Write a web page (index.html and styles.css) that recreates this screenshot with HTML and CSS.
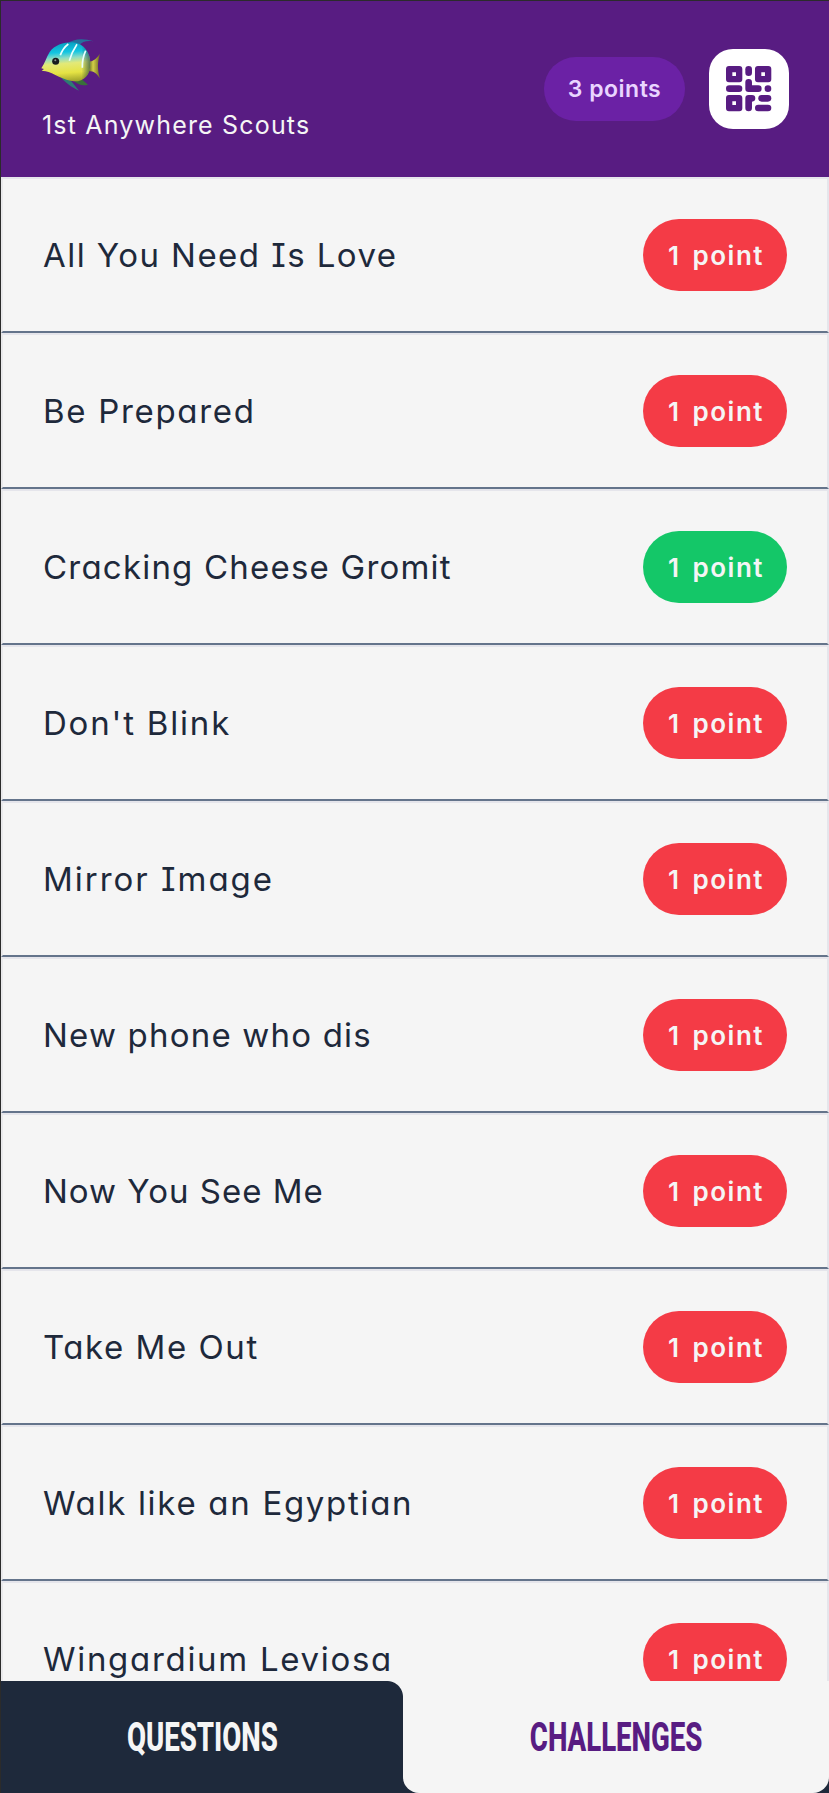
FILE: index.html
```html
<!DOCTYPE html>
<html lang="en">
<head>
<meta charset="utf-8">
<title>Challenges</title>
<link rel="stylesheet" href="styles.css">
</head>
<body>
<div class="app">
  <header class="header">
    <div class="team">
      <svg class="fish" viewBox="0 0 270 225" role="img" aria-label="Tropical fish">
        <defs>
          <linearGradient id="body" x1="0.45" y1="0" x2="0.55" y2="1">
            <stop offset="0" stop-color="#079fc0"/>
            <stop offset="0.25" stop-color="#13c5e2"/>
            <stop offset="0.4" stop-color="#8fdcc4"/>
            <stop offset="0.54" stop-color="#e3e978"/>
            <stop offset="0.78" stop-color="#e5e344"/>
            <stop offset="1" stop-color="#a1a42c"/>
          </linearGradient>
          <linearGradient id="shade" x1="0" y1="0" x2="1" y2="0">
            <stop offset="0.82" stop-color="#123c3c" stop-opacity="0"/>
            <stop offset="1" stop-color="#123c3c" stop-opacity="0.65"/>
          </linearGradient>
          <linearGradient id="tail" x1="0" y1="0" x2="1" y2="0">
            <stop offset="0" stop-color="#6f7424"/>
            <stop offset="0.35" stop-color="#d3cf47"/>
            <stop offset="1" stop-color="#6d6523"/>
          </linearGradient>
        </defs>
        <path fill="#246f9c" d="M112 56C128 42 158 38 191 49C169 46 157 50 147 61Z"/>
        <path fill="#2c7b74" d="M82 145C105 174 127 189 147 197L124 169Z"/>
        <path fill="#397039" d="M132 168C145 180 159 183 174 179L157 164Z"/>
        <path fill="url(#tail)" d="M178 109C189 111 200 99 210 86C202 112 202 133 210 160C200 145 190 136 178 139Z"/>
        <path fill="url(#body)" d="M34 130C45 115 49 96 59 81C74 61 98 52 128 52C163 55 182 84 181 119C180 150 162 170 132 169C103 168 69 143 47 139L35 137L42 132Z"/>
        <path fill="url(#shade)" d="M34 130C45 115 49 96 59 81C74 61 98 52 128 52C163 55 182 84 181 119C180 150 162 170 132 169C103 168 69 143 47 139L35 137L42 132Z"/>
        <path fill="none" stroke="#e9ffff" stroke-width="5" d="M115 57Q98 70 91 91M141 58Q125 82 118 107M167 77Q156 102 157 128"/>
        <circle cx="77" cy="109" r="10.5" fill="#171b1d"/>
        <circle cx="76" cy="106" r="3" fill="#8b9092"/>
      </svg>
      <div class="team-name">1st Anywhere Scouts</div>
    </div>
    <div class="header-actions">
      <span class="score">3 points</span>
      <button class="scan" aria-label="Scan code">
        <svg class="qr" viewBox="0 0 136 136" fill="#581c82">
          <path fill-rule="evenodd" d="M9 0H40Q49 0 49 9V40Q49 49 40 49H9Q0 49 0 40V9Q0 0 9 0ZM19 19V30H30V19Z"/>
          <path fill-rule="evenodd" d="M96 0H127Q136 0 136 9V40Q136 49 127 49H96Q87 49 87 40V9Q87 0 96 0ZM106 19V30H117V19Z"/>
          <path fill-rule="evenodd" d="M9 87H40Q49 87 49 96V127Q49 136 40 136H9Q0 136 0 127V96Q0 87 9 87ZM19 106V117H30V106Z"/>
          <rect x="58" y="0" width="20" height="30" rx="10"/>
          <rect x="0" y="58" width="49" height="20" rx="10"/>
          <path d="M58 49Q58 39 68 39Q78 39 78 49V58H97Q107 58 107 68Q107 78 97 78H68Q58 78 58 68Z"/>
          <circle cx="126" cy="68" r="10"/>
          <path d="M68 87H78Q88 87 88 97Q88 107 78 107V126Q78 136 68 136Q58 136 58 126V97Q58 87 68 87Z"/>
          <rect x="97" y="87" width="39" height="20" rx="10"/>
          <rect x="87" y="116" width="49" height="20" rx="10"/>
        </svg>
      </button>
    </div>
  </header>
  <main class="list">
    <div class="row"><span class="title t1">All You Need Is Love</span><span class="badge">1 point</span></div>
    <div class="row"><span class="title t2">Be Prepared</span><span class="badge">1 point</span></div>
    <div class="row"><span class="title t3">Cracking Cheese Gromit</span><span class="badge done">1 point</span></div>
    <div class="row"><span class="title t4">Don't Blink</span><span class="badge">1 point</span></div>
    <div class="row"><span class="title t5">Mirror Image</span><span class="badge">1 point</span></div>
    <div class="row"><span class="title t6">New phone who dis</span><span class="badge">1 point</span></div>
    <div class="row"><span class="title t7">Now You See Me</span><span class="badge">1 point</span></div>
    <div class="row"><span class="title t8">Take Me Out</span><span class="badge">1 point</span></div>
    <div class="row"><span class="title t9">Walk like an Egyptian</span><span class="badge">1 point</span></div>
    <div class="row"><span class="title t10">Wingardium Leviosa</span><span class="badge">1 point</span></div>
  </main>
  <nav class="tabs">
    <div class="tab questions"><span>QUESTIONS</span></div>
    <div class="tab challenges"><span>CHALLENGES</span></div>
  </nav>
</div>
</body>
</html>
```
FILE: styles.css
```css
* { box-sizing: border-box; }
body { margin: 0; background: #f5f5f5; font-family: Inter, "Open Sans", sans-serif; font-feature-settings: "cv11", "cv08"; }
.app { height: 1793px; border-top: 1px solid #2b2b2b; border-left: 1px solid #2b2b2b; display: flex; flex-direction: column; overflow: hidden; }
.header { height: 176px; flex: none; background: #581c82; display: flex; justify-content: space-between; padding: 24px 40px 0 29px; }
.team { display: flex; flex-direction: column; align-items: flex-start; }
.fish { display: block; width: 90px; height: 75px; }
.team-name { margin-left: 12px; margin-top: 8px; font-size: 25px; line-height: 34px; letter-spacing: 1.18px; color: #f5f5f5; white-space: nowrap; }
.header-actions { display: flex; align-items: center; gap: 24px; height: 80px; margin-top: 24px; }
.score { width: 141px; height: 64px; border-radius: 32px; background: #6b21a5; color: #e9d5ff; display: flex; align-items: center; justify-content: center; font-size: 23px; font-weight: 600; letter-spacing: 0.5px; white-space: nowrap; }
.scan { width: 80px; height: 80px; border: 0; border-radius: 24px; padding: 0; background: #fff; display: flex; align-items: center; justify-content: center; }
.qr { width: 45.3px; height: 45.3px; }
.list { flex: 1; min-height: 0; overflow: hidden; }
.row { height: 156px; border: 2px solid #e5e5eb; border-left-color: #e9e9eb; border-bottom-color: #64748b; display: flex; align-items: center; justify-content: space-between; padding: 0 40px; }
.title { font-size: 33px; line-height: 48px; color: #1e293b; white-space: nowrap; }
.t1 { letter-spacing: 1.45px; }
.t2 { letter-spacing: 1.69px; }
.t3 { letter-spacing: 1.21px; }
.t4 { letter-spacing: 1.8px; }
.t5 { letter-spacing: 1.98px; }
.t6 { letter-spacing: 1.2px; }
.t7 { letter-spacing: 1px; }
.t8 { letter-spacing: 1.55px; }
.t9 { letter-spacing: 1.7px; }
.t10 { letter-spacing: 1.7px; }
.badge { width: 144px; height: 72px; border-radius: 36px; background: #f43b46; color: #f5f5f5; display: flex; align-items: center; justify-content: center; padding-left: 2px; font-size: 26px; font-weight: 600; letter-spacing: 1.5px; word-spacing: 4px; white-space: nowrap; }
.badge.done { background: #14c768; }
.tabs { height: 112px; flex: none; display: flex; background: linear-gradient(90deg, #1e293b 50%, #1e293b 50%); }
.tab { height: 112px; display: flex; align-items: center; justify-content: center; font-family: Roboto, sans-serif; font-size: 40px; font-weight: 800; }
.tab span { display: block; transform: scaleX(0.69); }
.questions { width: 402px; color: #f5f5f5; position: relative; }
.questions::after { content: ""; position: absolute; top: 0; right: 0; width: 16px; height: 16px; background: radial-gradient(circle at 0 100%, transparent 15.5px, #f5f5f5 16.5px); }
.challenges { flex: 1; background: #f5f5f5; color: #581c82; border-radius: 0 0 16px 16px; }
```
